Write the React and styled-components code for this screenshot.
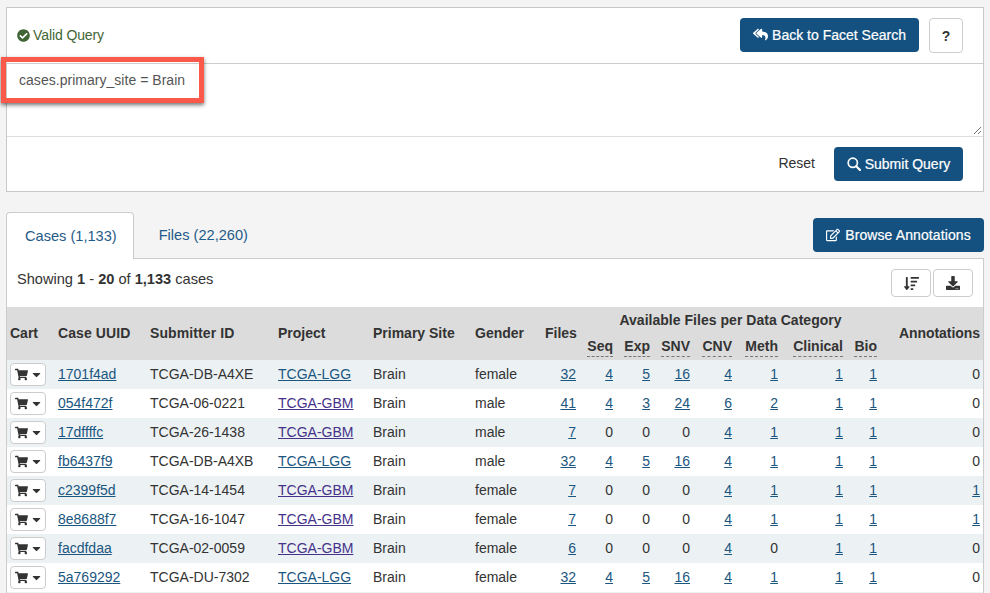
import React from "react";
import styled, { createGlobalStyle } from "styled-components";
import { FaCheckCircle, FaReplyAll, FaRegEdit, FaShoppingCart, FaCaretDown, FaSortAmountDown, FaDownload } from "react-icons/fa";

const Global = createGlobalStyle`
  html, body { margin: 0; padding: 0; background: #f4f4f4; height: 593px; overflow: hidden; }
  body { font-family: "Liberation Sans", Arial, sans-serif; font-size: 14px; color: #333; }
  * { box-sizing: border-box; }
`;

const Page = styled.div`
  position: relative;
  padding: 7px 6px 0;
  width: 990px;
  height: 593px;
  overflow: hidden;
`;
const QueryPanel = styled.section`
  background: #fff;
  border: 1px solid #c8c8c8;
  height: 185px;
  display: flex;
  flex-direction: column;
`;
const QueryHeader = styled.div`
  height: 56px;
  display: flex;
  align-items: flex-start;
  justify-content: space-between;
  padding: 10px 20px 0 10px;
  border-bottom: 1px solid #ccc;
`;
const Valid = styled.div`
  display: flex;
  align-items: center;
  gap: 3px;
  height: 34px;
  color: #3f6634;
  font-size: 14px;
  letter-spacing: -0.1px;
`;
const Actions = styled.div`
  display: flex;
  align-items: flex-start;
  gap: 10px;
`;
const PrimaryButton = styled.button`
  display: inline-flex;
  align-items: center;
  justify-content: center;
  gap: ${(p) => p.$gap || 4}px;
  height: 34px;
  width: ${(p) => p.$w}px;
  padding: 0 0 ${(p) => p.$lift || 0}px;
  border: 0;
  border-radius: 4px;
  background: #155180;
  color: #fff;
  font: 14px "Liberation Sans", Arial, sans-serif;
  letter-spacing: ${(p) => p.$track || 0}px;
  -webkit-text-stroke: 0.2px #fff;
`;
const HelpButton = styled.button`
  width: 34px;
  height: 35px;
  border: 1px solid #ccc;
  border-radius: 4px;
  background: #fff;
  color: #333;
  font: bold 14px "Liberation Sans", Arial, sans-serif;
  padding: 0;
`;
const Editor = styled.div`
  position: relative;
  height: 73px;
  padding: 7px 12px;
  border-bottom: 1px solid #ddd;
  color: #555;
  font-size: 14px;
  line-height: 18px;
  letter-spacing: 0.03px;
`;
const Grip = styled.svg`
  position: absolute;
  right: 1px;
  bottom: 1px;
`;
const QueryFooter = styled.div`
  flex: 1;
  display: flex;
  align-items: center;
  justify-content: flex-end;
  gap: 19px;
  padding: 0 20px 1px;
`;
const Reset = styled.span`
  color: #333;
  font-size: 14px;
  margin-top: -2px;
`;
const Highlight = styled.div`
  position: absolute;
  left: 1px;
  top: 57px;
  width: 203px;
  height: 46px;
  border: 5.5px solid #fb5a4a;
  box-shadow: 0 2px 4px rgba(0, 0, 0, 0.55);
  pointer-events: none;
`;
const TabBar = styled.div`
  margin-top: 20px;
  height: 46px;
  display: flex;
  justify-content: space-between;
  align-items: flex-start;
  position: relative;
`;
const Tabs = styled.div`
  display: flex;
  gap: 2px;
`;
const Tab = styled.div`
  height: 46px;
  padding: ${(p) => (p.$active ? "0 16px 1px 18px" : "0 23px 1px")};
  display: flex;
  align-items: center;
  font-size: 14.6px;
  color: #1f5a88;
  border-radius: 4px 4px 0 0;
  position: relative;
  z-index: 1;
  ${(p) => p.$active && `
    background: #fff;
    border: 1px solid #ccc;
    border-bottom: 0;
    height: 47px;
  `}
`;
const BrowseSlot = styled.div`
  margin-top: 6px;
`;
const Results = styled.section`
  background: #fff;
  border: 1px solid #ccc;
  border-bottom: 0;
  height: 340px;
`;
const ResultsBar = styled.div`
  height: 48px;
  display: flex;
  justify-content: space-between;
  padding: 0 10px;
  align-items: flex-start;
`;
const Showing = styled.div`
  margin-top: 11px;
  line-height: 18px;
  font-size: 14.6px;
  color: #333;
  b { font-weight: bold; }
`;
const Tools = styled.div`
  display: flex;
  gap: 2px;
  margin-top: 10px;
`;
const ToolButton = styled.button`
  width: 40px;
  height: 28px;
  border: 1px solid #ccc;
  border-radius: 4px;
  background: #fff;
  color: #333;
  padding: 0;
  display: flex;
  align-items: center;
  justify-content: center;
`;
const Table = styled.table`
  width: 976px;
  table-layout: fixed;
  border-collapse: collapse;
  font-size: 14px;
`;
const HeadCell = styled.th`
  background: #dcdcdc;
  font-weight: bold;
  color: #333;
  padding: 0 ${(p) => p.$pad || 4}px ${(p) => p.$lift ?? 1}px;
  height: ${(p) => p.$h || 26}px;
  text-align: ${(p) => p.$align || "left"};
  white-space: nowrap;
  letter-spacing: ${(p) => p.$track || 0}px;
`;
const Dashed = styled.span`
  border-bottom: 1px dashed #777;
  padding-bottom: 2px;
`;
const Row = styled.tr`
  background: ${(p) => (p.$odd ? "#ecf1f4" : "#fff")};
`;
const Cell = styled.td`
  height: 29px;
  padding: 0 ${(p) => p.$pad || 4}px ${(p) => (p.$flat ? 0 : 2)}px;
  text-align: ${(p) => p.$align || "left"};
  white-space: nowrap;
  color: #333;
`;
const Link = styled.a`
  color: ${(p) => (p.$visited ? "#45328a" : "#1b5680")};
  text-decoration: underline;
`;
const CartButton = styled.button`
  width: 36px;
  height: 23px;
  border: 1px solid #ccc;
  border-radius: 4px;
  background: #fff;
  color: #333;
  padding: 0 0 0 1px;
  display: inline-flex;
  align-items: center;
  justify-content: center;
  gap: 2px;
  vertical-align: middle;
`;

const widths = [47, 92, 128, 95, 102, 70, 39, 37, 37, 40, 42, 46, 65, 34, 102];
const rows = [
  ["1701f4ad", "TCGA-DB-A4XE", "TCGA-LGG", "female", "32", "4", "5", "16", "4", "1", "1", "1", "0"],
  ["054f472f", "TCGA-06-0221", "TCGA-GBM", "male", "41", "4", "3", "24", "6", "2", "1", "1", "0"],
  ["17dffffc", "TCGA-26-1438", "TCGA-GBM", "male", "7", "0", "0", "0", "4", "1", "1", "1", "0"],
  ["fb6437f9", "TCGA-DB-A4XB", "TCGA-LGG", "male", "32", "4", "5", "16", "4", "1", "1", "1", "0"],
  ["c2399f5d", "TCGA-14-1454", "TCGA-GBM", "female", "7", "0", "0", "0", "4", "1", "1", "1", "1"],
  ["8e8688f7", "TCGA-16-1047", "TCGA-GBM", "female", "7", "0", "0", "0", "4", "1", "1", "1", "1"],
  ["facdfdaa", "TCGA-02-0059", "TCGA-GBM", "female", "6", "0", "0", "0", "4", "0", "1", "1", "0"],
  ["5a769292", "TCGA-DU-7302", "TCGA-LGG", "female", "32", "4", "5", "16", "4", "1", "1", "1", "0"],
];
const cats = ["Seq", "Exp", "SNV", "CNV", "Meth", "Clinical", "Bio"];

const Count = ({ v }) => (v === "0" ? v : <Link href="#">{v}</Link>);

const SearchGlyph = () => (
  <svg width="14" height="14" viewBox="0 0 14 14" fill="none" stroke="currentColor">
    <circle cx="5.8" cy="5.8" r="4.6" strokeWidth="1.7" />
    <path d="M9.2 9.2 L13 13" strokeWidth="2.2" strokeLinecap="round" />
  </svg>
);

export default function App() {
  return (
    <Page>
      <Global />
      <QueryPanel>
        <QueryHeader>
          <Valid><FaCheckCircle size={13} />Valid Query</Valid>
          <Actions>
            <PrimaryButton $w={179} $lift={1}><FaReplyAll size={15} />Back to Facet Search</PrimaryButton>
            <HelpButton>?</HelpButton>
          </Actions>
        </QueryHeader>
        <Editor>
          cases.primary_site = Brain
          <Grip width="9" height="9" viewBox="0 0 9 9">
            <path d="M1 8 L8 1 M5 8 L8 5" stroke="#777" strokeWidth="1" fill="none" />
          </Grip>
        </Editor>
        <QueryFooter>
          <Reset>Reset</Reset>
          <PrimaryButton $w={129} $gap={4}><SearchGlyph />Submit Query</PrimaryButton>
        </QueryFooter>
      </QueryPanel>
      <Highlight />
      <TabBar>
        <Tabs>
          <Tab $active>Cases (1,133)</Tab>
          <Tab>Files (22,260)</Tab>
        </Tabs>
        <BrowseSlot>
          <PrimaryButton $w={171} $gap={5} $track={0.1}><FaRegEdit size={14} />Browse Annotations</PrimaryButton>
        </BrowseSlot>
      </TabBar>
      <Results>
        <ResultsBar>
          <Showing>Showing <b>1</b> - <b>20</b> of <b>1,133</b> cases</Showing>
          <Tools>
            <ToolButton><FaSortAmountDown size={15} /></ToolButton>
            <ToolButton><FaDownload size={14} /></ToolButton>
          </Tools>
        </ResultsBar>
        <Table>
          <colgroup>
            {widths.map((w, i) => <col key={i} style={{ width: w }} />)}
          </colgroup>
          <thead>
            <tr>
              <HeadCell rowSpan={2} $pad={3} $h={27}>Cart</HeadCell>
              <HeadCell rowSpan={2} $track={0.1}>Case UUID</HeadCell>
              <HeadCell rowSpan={2} $track={0.1}>Submitter ID</HeadCell>
              <HeadCell rowSpan={2}>Project</HeadCell>
              <HeadCell rowSpan={2}>Primary Site</HeadCell>
              <HeadCell rowSpan={2}>Gender</HeadCell>
              <HeadCell rowSpan={2} $align="right">Files</HeadCell>
              <HeadCell colSpan={7} $align="center" $track={0.03} $h={27}>Available Files per Data Category</HeadCell>
              <HeadCell rowSpan={2} $align="right" $pad={3} $track={-0.05}>Annotations</HeadCell>
            </tr>
            <tr>
              {cats.map((c) => (
                <HeadCell key={c} $align="right" $lift={2}><Dashed>{c}</Dashed></HeadCell>
              ))}
            </tr>
          </thead>
          <tbody>
            {rows.map((r, i) => (
              <Row key={r[0]} $odd={i % 2 === 0}>
                <Cell $pad={3} $flat>
                  <CartButton><FaShoppingCart size={13} /><FaCaretDown size={13} /></CartButton>
                </Cell>
                <Cell><Link href="#">{r[0]}</Link></Cell>
                <Cell>{r[1]}</Cell>
                <Cell><Link href="#" $visited={r[2] === "TCGA-GBM"}>{r[2]}</Link></Cell>
                <Cell>Brain</Cell>
                <Cell>{r[3]}</Cell>
                {r.slice(4, 12).map((v, j) => (
                  <Cell key={j} $align="right"><Count v={v} /></Cell>
                ))}
                <Cell $align="right" $pad={3}><Count v={r[12]} /></Cell>
              </Row>
            ))}
            <Row $odd><Cell colSpan={15} /></Row>
          </tbody>
        </Table>
      </Results>
    </Page>
  );
}
